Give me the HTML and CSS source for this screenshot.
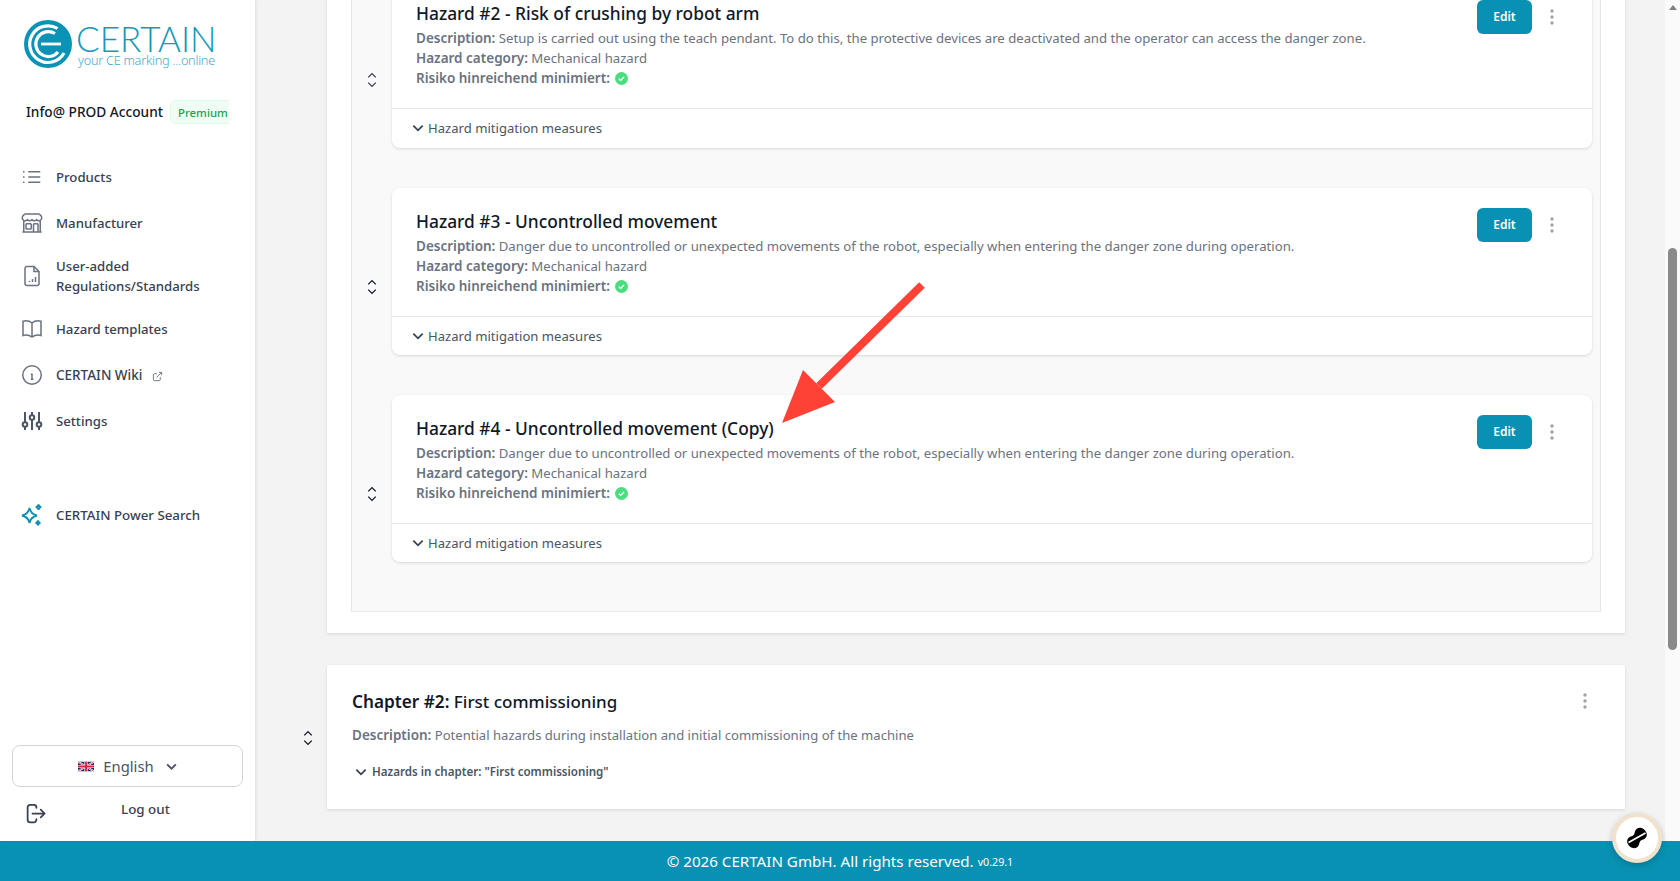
FILE: index.html
```html
<!DOCTYPE html>
<html lang="en">
<head>
<meta charset="utf-8">
<title>CERTAIN</title>
<link rel="stylesheet" href="styles.css">
</head>
<body>
<div class="app">
  <div class="workspace">
    <aside class="sidebar">
      <div class="logo">
        <svg class="logo-mark" viewBox="0 0 48 48">
          <circle cx="24" cy="24" r="24" fill="#0a93b5"/>
          <path d="M33.500 8.500A18.300 18.300 0 1 0 40 33" fill="none" stroke="#fff" stroke-width="3.200"/>
          <path d="M31 13.500A12.500 12.500 0 1 0 34 32" fill="none" stroke="#fff" stroke-width="3.200"/>
          <path d="M17 24H37" fill="none" stroke="#fff" stroke-width="2.800"/>
        </svg>
        <div class="logo-text">
          <div class="logo-name">CERTAIN</div>
          <div class="logo-tag">your CE marking ...online</div>
        </div>
      </div>
      <div class="account"><span class="account-name">Info@ PROD Account</span><span class="badge">Premium</span></div>
      <nav class="nav">
        <a class="nav-item"><svg class="nav-icon" viewBox="0 0 24 24"><path d="M8.250 6.750h12M8.250 12h12m-12 5.250h12M3.750 6.750h.007v.008H3.750V6.750zM3.750 12h.007v.008H3.750V12zm0 5.250h.007v.008H3.750v-.008z"/></svg><span>Products</span></a>
        <a class="nav-item"><svg class="nav-icon" viewBox="0 0 24 24"><path d="M13.5 21v-7.5a.75.75 0 01.75-.75h3a.75.75 0 01.75.75V21m-4.5 0H2.36m11.14 0H18m0 0h3.64m-1.39 0V9.349m-16.5 11.65V9.35m0 0a3.001 3.001 0 003.75-.615A2.993 2.993 0 009.75 9.75c.896 0 1.7-.393 2.25-1.016a2.993 2.993 0 002.25 1.016c.896 0 1.7-.393 2.25-1.016a3.001 3.001 0 003.75.614m-16.5 0a3.004 3.004 0 01-.621-4.72L4.318 3.44A1.5 1.5 0 015.378 3h13.243a1.5 1.5 0 011.06.44l1.19 1.189a3 3 0 01-.621 4.72m-13.5 8.65h3.75a.75.75 0 00.75-.75V13.5a.75.75 0 00-.75-.75H6.75a.75.75 0 00-.75.75v3.75c0 .415.336.75.75.75z"/></svg><span>Manufacturer</span></a>
        <a class="nav-item nav-item-tall"><svg class="nav-icon" viewBox="0 0 24 24"><path d="M14 2.500H7a2 2 0 0 0-2 2v15a2 2 0 0 0 2 2h10a2 2 0 0 0 2-2V7.500z"/><path d="M14 2.500v5h5M9.500 18v-1M12.500 18v-3M15.500 18v-5"/></svg><span>User-added<br>Regulations/Standards</span></a>
        <a class="nav-item"><svg class="nav-icon" viewBox="0 0 24 24"><path d="M12 6.042A8.967 8.967 0 006 3.75c-1.052 0-2.062.18-3 .512v14.25A8.987 8.987 0 016 18c2.305 0 4.408.867 6 2.292m0-14.25a8.966 8.966 0 016-2.292c1.052 0 2.062.18 3 .512v14.25A8.988 8.988 0 0018 18a8.967 8.967 0 00-6 2.292m0-14.25v14.25"/></svg><span>Hazard templates</span></a>
        <a class="nav-item"><svg class="nav-icon" viewBox="0 0 24 24"><circle cx="12" cy="12" r="9.250"/><path d="M10.800 11.200H12v5M10.800 16.200h2.600M12 7.600v.2"/></svg><span class="nav-wiki">CERTAIN Wiki</span><svg class="ext-icon" viewBox="0 0 24 24"><path d="M18 13v6a2 2 0 0 1-2 2H5a2 2 0 0 1-2-2V8a2 2 0 0 1 2-2h6M15 3h6v6M10 14 21 3"/></svg></a>
        <a class="nav-item"><svg class="nav-icon nav-icon-bold" viewBox="0 0 24 24"><path d="M5 3v10M5 18v3M12 3v3M12 11v10M19 3v10M19 18v3"/><circle cx="5" cy="15.500" r="2.300"/><circle cx="12" cy="8.500" r="2.300"/><circle cx="19" cy="15.500" r="2.300"/></svg><span>Settings</span></a>
        <a class="nav-item nav-item-search"><svg class="nav-icon nav-icon-teal" viewBox="0 0 24 24"><path d="M9.500 5c.9 4.400 2.900 6.400 7.500 7.500-4.600 1.100-6.600 3.100-7.500 7.500-.9-4.400-2.900-6.400-7.500-7.500 4.600-1.100 6.600-3.100 7.500-7.500z"/><path d="M18.500 1.500c.3 1.700 1 2.400 2.700 2.700-1.700.3-2.400 1-2.700 2.700-.3-1.700-1-2.400-2.700-2.700 1.700-.3 2.400-1 2.700-2.700zM18 17.500c.3 1.500.9 2.100 2.400 2.400-1.500.3-2.100.9-2.400 2.400-.3-1.500-.9-2.100-2.400-2.400 1.500-.3 2.100-.9 2.400-2.400z"/></svg><span class="nav-search">CERTAIN Power Search</span></a>
      </nav>
      <div class="sidebar-bottom">
        <button class="lang">
          <svg class="flag" viewBox="0 0 60 36"><rect width="60" height="36" rx="3" fill="#1f2a6b"/><path d="M0 0l60 36M60 0L0 36" stroke="#fff" stroke-width="7"/><path d="M0 0l60 36M60 0L0 36" stroke="#d4233f" stroke-width="2.500"/><path d="M30 0v36M0 18h60" stroke="#fff" stroke-width="12"/><path d="M30 0v36M0 18h60" stroke="#d4233f" stroke-width="7"/></svg>
          <span>English</span>
          <svg class="lang-chev" viewBox="0 0 24 24"><path d="M5 8.500l7 7 7-7"/></svg>
        </button>
        <div class="logout">
          <svg class="logout-icon" viewBox="0 0 24 24"><path d="M13 5.500V4.800A2.800 2.800 0 0 0 10.200 2H6a3 3 0 0 0-3 3v14a3 3 0 0 0 3 3h4.200a2.800 2.800 0 0 0 2.800-2.800v-.7M8.500 12H22M18 7.500l4.500 4.500-4.500 4.500"/></svg>
          <span class="logout-text">Log out</span>
        </div>
      </div>
    </aside>

    <main class="main">
      <div class="content">
        <section class="chapter-row">
          <div class="sort-col"></div>
          <div class="chapter chapter-open">
            <div class="panel">
              <div class="hazard-row hazard-row-first">
                <div class="hazard-sort"><svg class="sort-icon sort-gray" viewBox="0 0 24 24"><path d="M7 8.500l5-5 5 5M7 15.500l5 5 5-5"/></svg></div>
                <article class="hazard">
                  <div class="hazard-body">
                    <div class="hazard-info">
                      <h3 class="hazard-title">Hazard #2 - Risk of crushing by robot arm</h3>
                      <p class="line"><b>Description:</b> Setup is carried out using the teach pendant. To do this, the protective devices are deactivated and the operator can access the danger zone.</p>
                      <p class="line"><b>Hazard category:</b> Mechanical hazard</p>
                      <p class="line"><b>Risiko hinreichend minimiert:</b> <svg class="ok" viewBox="0 0 20 20"><circle cx="10" cy="10" r="10" fill="#4ade80"/><path d="M6 10.300l2.800 2.700L14 7.500" fill="none" stroke="#fff" stroke-width="2"/></svg></p>
                    </div>
                    <div class="hazard-actions"><button class="edit">Edit</button><svg class="dots" viewBox="0 0 6 20"><circle cx="3" cy="3" r="2"/><circle cx="3" cy="10" r="2"/><circle cx="3" cy="17" r="2"/></svg></div>
                  </div>
                  <div class="hazard-foot"><svg class="chev" viewBox="0 0 24 24"><path d="M5 8.500l7 7 7-7"/></svg><span>Hazard mitigation measures</span></div>
                </article>
              </div>
              <div class="hazard-row">
                <div class="hazard-sort"><svg class="sort-icon" viewBox="0 0 24 24"><path d="M7 8.500l5-5 5 5M7 15.500l5 5 5-5"/></svg></div>
                <article class="hazard">
                  <div class="hazard-body">
                    <div class="hazard-info">
                      <h3 class="hazard-title">Hazard #3 - Uncontrolled movement</h3>
                      <p class="line"><b>Description:</b> Danger due to uncontrolled or unexpected movements of the robot, especially when entering the danger zone during operation.</p>
                      <p class="line"><b>Hazard category:</b> Mechanical hazard</p>
                      <p class="line"><b>Risiko hinreichend minimiert:</b> <svg class="ok" viewBox="0 0 20 20"><circle cx="10" cy="10" r="10" fill="#4ade80"/><path d="M6 10.300l2.800 2.700L14 7.500" fill="none" stroke="#fff" stroke-width="2"/></svg></p>
                    </div>
                    <div class="hazard-actions"><button class="edit">Edit</button><svg class="dots" viewBox="0 0 6 20"><circle cx="3" cy="3" r="2"/><circle cx="3" cy="10" r="2"/><circle cx="3" cy="17" r="2"/></svg></div>
                  </div>
                  <div class="hazard-foot"><svg class="chev" viewBox="0 0 24 24"><path d="M5 8.500l7 7 7-7"/></svg><span>Hazard mitigation measures</span></div>
                </article>
              </div>
              <div class="hazard-row">
                <div class="hazard-sort"><svg class="sort-icon" viewBox="0 0 24 24"><path d="M7 8.500l5-5 5 5M7 15.500l5 5 5-5"/></svg></div>
                <article class="hazard">
                  <div class="hazard-body">
                    <div class="hazard-info">
                      <h3 class="hazard-title">Hazard #4 - Uncontrolled movement (Copy)</h3>
                      <p class="line"><b>Description:</b> Danger due to uncontrolled or unexpected movements of the robot, especially when entering the danger zone during operation.</p>
                      <p class="line"><b>Hazard category:</b> Mechanical hazard</p>
                      <p class="line"><b>Risiko hinreichend minimiert:</b> <svg class="ok" viewBox="0 0 20 20"><circle cx="10" cy="10" r="10" fill="#4ade80"/><path d="M6 10.300l2.800 2.700L14 7.500" fill="none" stroke="#fff" stroke-width="2"/></svg></p>
                    </div>
                    <div class="hazard-actions"><button class="edit">Edit</button><svg class="dots" viewBox="0 0 6 20"><circle cx="3" cy="3" r="2"/><circle cx="3" cy="10" r="2"/><circle cx="3" cy="17" r="2"/></svg></div>
                  </div>
                  <div class="hazard-foot"><svg class="chev" viewBox="0 0 24 24"><path d="M5 8.500l7 7 7-7"/></svg><span>Hazard mitigation measures</span></div>
                </article>
              </div>
            </div>
          </div>
        </section>
        <section class="chapter-row chapter-row-next">
          <div class="sort-col"><svg class="sort-icon" viewBox="0 0 24 24"><path d="M7 8.500l5-5 5 5M7 15.500l5 5 5-5"/></svg></div>
          <div class="chapter chapter-closed">
            <div class="chapter-head">
              <h2 class="chapter-title"><b>Chapter #2:</b> First commissioning</h2>
              <svg class="dots" viewBox="0 0 6 20"><circle cx="3" cy="3" r="2"/><circle cx="3" cy="10" r="2"/><circle cx="3" cy="17" r="2"/></svg>
            </div>
            <p class="line chapter-desc"><b>Description:</b> Potential hazards during installation and initial commissioning of the machine</p>
            <div class="chapter-toggle"><svg class="chev" viewBox="0 0 24 24"><path d="M5 8.500l7 7 7-7"/></svg><span>Hazards in chapter: "First commissioning"</span></div>
          </div>
        </section>
      </div>
      <svg class="arrow" viewBox="0 0 160 150"><path d="M140 4 37 105" fill="none" stroke="#ff4136" stroke-width="8"/><path d="M0 142 21 89 53 121z" fill="#ff4136"/></svg>
    </main>

    <div class="scrollbar">
      <div class="scroll-up"></div>
      <div class="scroll-thumb"></div>
    </div>
  </div>
  <footer class="footer"><span>© 2026 CERTAIN GmbH. All rights reserved.</span> <small>v0.29.1</small></footer>
  <button class="float-btn"><svg viewBox="0 0 24 24"><g transform="rotate(42 12 12)"><path d="M12 1c4.500 0 7 3 6.200 6.500-.5 2-1.700 2.800-1.700 4.500s1.200 2.500 1.700 4.500C19 20 16.500 23 12 23s-7-3-6.200-6.500c.5-2 1.700-2.800 1.700-4.500S6.300 9.500 5.800 7.500C5 4 7.500 1 12 1z" fill="#000"/></g><path d="M3.500 16.500 20.500 7" stroke="#fff" stroke-width="1.600"/></svg></button>
</div>
</body>
</html>
```

FILE: styles.css
```css
* { box-sizing: border-box; }
html, body { margin: 0; height: 100%; overflow: hidden; }
body { font-family: "Noto Sans", sans-serif; font-size: 13.200px; line-height: 20px; color: #111827; background: #f3f3f3; }
.app { position: relative; height: 881px; display: flex; flex-direction: column; }
.workspace { flex: 1; min-height: 0; display: flex; }

/* sidebar */
.sidebar { width: 256px; flex: none; background: #fff; border-right: 1px solid #e5e7eb; box-shadow: 1px 0 2px rgba(0,0,0,.05); display: flex; flex-direction: column; z-index: 2; }
.logo { display: flex; gap: 4px; padding: 20px 0 0 24px; height: 68px; }
.logo-mark { width: 48px; height: 48px; flex: none; }
.logo-text { color: #1497b8; }
.logo-name { font-family: Lato, sans-serif; font-weight: 300; font-size: 35px; line-height: 26px; margin-top: 5px; }
.logo-tag { font-family: "Noto Sans", sans-serif; font-weight: 300; font-size: 12.700px; line-height: 14px; margin: 2px 0 0 2px; color: #43acc8; letter-spacing: -.25px; white-space: nowrap; }
.account { display: flex; align-items: center; margin-top: 32px; padding-left: 26px; width: 229px; overflow: hidden; white-space: nowrap; }
.account-name { font-size: 13.700px; font-weight: 500; color: #111827; }
.badge { margin-left: 7px; height: 24px; width: 70px; flex: none; padding: 0 7px; font-size: 11.400px; font-weight: 500; line-height: 23px; color: #16a34a; background: #f0fdf4; border: 1px solid #dcfce7; border-radius: 6px; }
.nav { display: flex; flex-direction: column; margin-top: 30px; padding-left: 20px; }
.nav-item { height: 46px; display: flex; align-items: center; gap: 12px; font-weight: 500; color: #374151; }
.nav-item-tall { height: 60px; }
.nav-item-search { margin-top: 48px; }
.nav-wiki { font-size: 13.500px; }
.nav-search { font-size: 13.300px; }
.nav-icon { width: 24px; height: 24px; flex: none; fill: none; stroke: #6b7280; stroke-width: 1.500; }
.nav-icon-bold { stroke: #4b5563; stroke-width: 2; }
.nav-icon-teal { stroke: #0891b2; stroke-width: 1.800; }
.ext-icon { width: 11px; height: 11px; margin: 2px 0 0 -2px; fill: none; stroke: #6b7280; stroke-width: 2; }
.sidebar-bottom { margin-top: auto; padding: 0 12px; }
.lang { width: 231px; height: 42px; display: flex; align-items: center; justify-content: center; gap: 9px; background: #fff; border: 1px solid #d1d5db; border-radius: 8px; font: inherit; font-size: 14.800px; color: #4b5563; padding: 0 0 0 2px; }
.flag { width: 16px; height: 11px; }
.lang-chev { width: 15px; height: 15px; margin-left: 1px; fill: none; stroke: #4b5563; stroke-width: 3; }
.logout { height: 54px; display: flex; padding: 12px 0 0 13px; }
.logout-icon { width: 21px; height: 21px; margin-top: 4px; fill: none; stroke: #374151; stroke-width: 2; stroke-linecap: round; stroke-linejoin: round; }
.logout-text { margin-left: 75px; font-size: 13.400px; font-weight: 500; color: #374151; }

/* main */
.main { position: relative; flex: 1; min-width: 0; overflow: hidden; }
.content { margin-top: -22px; padding-right: 40px; }
.chapter-row { display: flex; }
.chapter-row-next { margin-top: 32px; }
.sort-col { width: 71px; flex: none; display: flex; align-items: center; justify-content: center; padding: 2px 0 0 32px; }
.chapter { flex: 1; background: #fff; box-shadow: 0 1px 3px rgba(0,0,0,.12); }
.chapter-open { padding: 0 24px 21px 24px; }
.panel { background: #f9f9f9; border: 1px solid #e5e7eb; border-top: 0; padding: 2px 8px 9px 0; }
.hazard-row { display: flex; margin-bottom: 40px; }
.hazard-sort { width: 40px; flex: none; display: flex; justify-content: center; align-items: center; padding-top: 31px; }
.sort-icon { width: 18px; height: 18px; fill: none; stroke: #111827; stroke-width: 1.800; }
.sort-gray { stroke: #374151; }
.hazard { flex: 1; background: #fff; border-radius: 8px; box-shadow: 0 1px 3px rgba(0,0,0,.14); }
.hazard-body { height: 129px; display: flex; justify-content: space-between; padding: 19px 37px 0 24px; border-bottom: 1px solid #e5e7eb; }
.hazard-title { margin: 0 0 1px; font-size: 17.350px; line-height: 28px; font-weight: 500; color: #111827; }
.line { margin: 0; color: #6b7280; font-size: 13.180px; line-height: 20px; }
.line b { font-size: 13.500px; font-weight: 600; }
.ok { width: 13px; height: 13px; vertical-align: -1.500px; margin-left: 2px; }
.hazard-actions { display: flex; gap: 17px; align-items: center; height: 34px; margin-top: 1px; }
.edit { width: 55px; height: 34px; padding: 0; background: #0891b2; color: #fff; border: 0; border-radius: 6px; font: inherit; font-size: 12px; font-weight: 600; }
.dots { width: 6px; height: 20px; flex: none; fill: #a1a1aa; transform: scale(.85); }
.hazard-foot { height: 38px; display: flex; align-items: center; gap: 2px; padding-left: 18px; color: #4b5563; font-size: 13.100px; }
.hazard-row-first .hazard-foot { height: 39px; padding-bottom: 2px; }
.chev { width: 16px; height: 16px; flex: none; fill: none; stroke: #374151; stroke-width: 2.700; }

.chapter-closed { height: 144px; padding: 23px 37px 0 25px; }
.chapter-head { display: flex; justify-content: space-between; align-items: center; height: 28px; }
.chapter-head .dots { margin-top: -2px; }
.chapter-title { margin: 0; font-size: 17px; line-height: 28px; font-weight: 500; color: #111827; }
.chapter-title b { font-size: 17.200px; font-weight: 600; }
.chapter-desc { margin-top: 9px; font-size: 13.100px; }
.chapter-toggle { display: flex; align-items: center; gap: 3px; margin-top: 17px; padding-left: 1px; font-size: 11.600px; font-weight: 600; line-height: 20px; color: #4b5563; }

.arrow { position: absolute; left: 526px; top: 281px; width: 160px; height: 150px; }

/* scrollbar */
.scrollbar { width: 15px; flex: none; background: #fafafa; display: flex; flex-direction: column; align-items: center; }
.scroll-up { margin-top: 5px; width: 0; height: 0; border: 4.500px solid transparent; border-top: 0; border-bottom: 5px solid #808080; }
.scroll-thumb { margin-top: 238px; width: 9px; height: 402px; border-radius: 5px; background: #8a8a8a; }

/* footer */
.footer { height: 40px; flex: none; background: #0891b2; color: #fff; display: flex; align-items: center; justify-content: center; gap: 4px; font-size: 15.150px; }
.footer small { font-size: 10.700px; padding-top: 1px; }
.float-btn { position: absolute; left: 1612px; top: 813px; width: 50px; height: 50px; padding: 0; border-radius: 50%; background: #fff; border: 4px solid #f0e2cd; box-shadow: 0 2px 6px rgba(0,0,0,.2); display: flex; align-items: center; justify-content: center; }
.float-btn svg { width: 24px; height: 24px; }
```
